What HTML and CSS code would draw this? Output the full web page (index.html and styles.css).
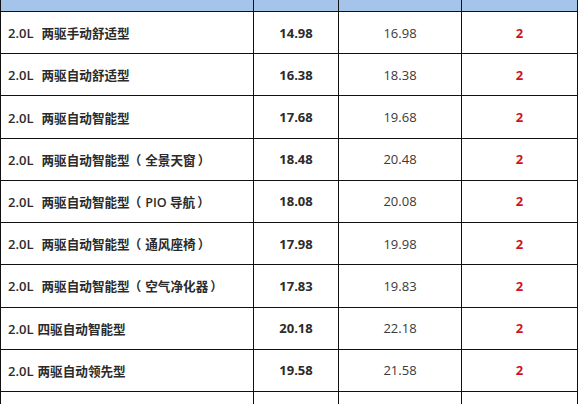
FILE: index.html
```html
<!DOCTYPE html>
<html lang="zh">
<head>
<meta charset="utf-8">
<link rel="stylesheet" href="styles.css">
</head>
<body>
<table class="price-table">
  <colgroup>
    <col class="c-name"><col class="c-guide"><col class="c-market"><col class="c-count">
  </colgroup>
  <tr class="head"><td></td><td></td><td></td><td></td></tr>
  <tr><td class="name"><span class="disp">2.0L</span>两驱手动舒适型</td><td class="guide">14.98</td><td class="market">16.98</td><td class="count">2</td></tr>
  <tr><td class="name"><span class="disp">2.0L</span>两驱自动舒适型</td><td class="guide">16.38</td><td class="market">18.38</td><td class="count">2</td></tr>
  <tr><td class="name"><span class="disp">2.0L</span>两驱自动智能型</td><td class="guide">17.68</td><td class="market">19.68</td><td class="count">2</td></tr>
  <tr><td class="name"><span class="disp">2.0L</span>两驱自动智能型<span class="lp">（</span>全景天窗<span class="rp">）</span></td><td class="guide">18.48</td><td class="market">20.48</td><td class="count">2</td></tr>
  <tr><td class="name"><span class="disp">2.0L</span>两驱自动智能型<span class="lp">（</span>PIO 导航<span class="rp">）</span></td><td class="guide">18.08</td><td class="market">20.08</td><td class="count">2</td></tr>
  <tr><td class="name"><span class="disp">2.0L</span>两驱自动智能型<span class="lp">（</span>通风座椅<span class="rp">）</span></td><td class="guide">17.98</td><td class="market">19.98</td><td class="count">2</td></tr>
  <tr><td class="name"><span class="disp">2.0L</span>两驱自动智能型<span class="lp">（</span>空气净化器<span class="rp">）</span></td><td class="guide">17.83</td><td class="market">19.83</td><td class="count">2</td></tr>
  <tr><td class="name"><span class="disp tight">2.0L</span>四驱自动智能型</td><td class="guide">20.18</td><td class="market">22.18</td><td class="count">2</td></tr>
  <tr><td class="name"><span class="disp tight">2.0L</span>两驱自动领先型</td><td class="guide">19.58</td><td class="market">21.58</td><td class="count">2</td></tr>
  <tr><td class="name"></td><td class="guide"></td><td class="market"></td><td class="count"></td></tr>
</table>
</body>
</html>
```

FILE: styles.css
```css
html, body {
  margin: 0;
  padding: 0;
  background: #ffffff;
  overflow: hidden;
}
.price-table {
  border-collapse: collapse;
  table-layout: fixed;
  width: 577px;
  font-family: "Open Sans", "Noto Sans CJK SC", sans-serif;
  font-size: 13px;
  color: #333333;
}
.c-name { width: 253px; }
.c-guide { width: 85px; }
.c-market { width: 123px; }
.c-count { width: 116px; }
.price-table td {
  border: 1px solid #111111;
  height: 41.22px;
  padding: 0;
  vertical-align: middle;
  text-align: center;
  white-space: nowrap;
}
.price-table tr.head td {
  height: 11px;
  background: #a4c4e9;
  border-top: none;
}
.price-table td.name {
  text-align: left;
  padding-left: 7px;
  font-size: 12.6px;
  font-weight: 600;
  color: #2b2b2b;
}
.disp {
  display: inline-block;
  font-size: 13px;
  margin-right: 8px;
}
.disp.tight {
  margin-right: 4px;
}
.lp {
  display: inline-block;
  margin: 0 4px 0 -1px;
}
.rp {
  display: inline-block;
  margin-left: 2px;
}
.price-table td.guide {
  font-weight: 700;
  color: #2b2b2b;
}
.price-table td.market {
  font-weight: 400;
  color: #3a3a3a;
}
.price-table td.count {
  font-weight: 700;
  color: #d0121b;
}
```
